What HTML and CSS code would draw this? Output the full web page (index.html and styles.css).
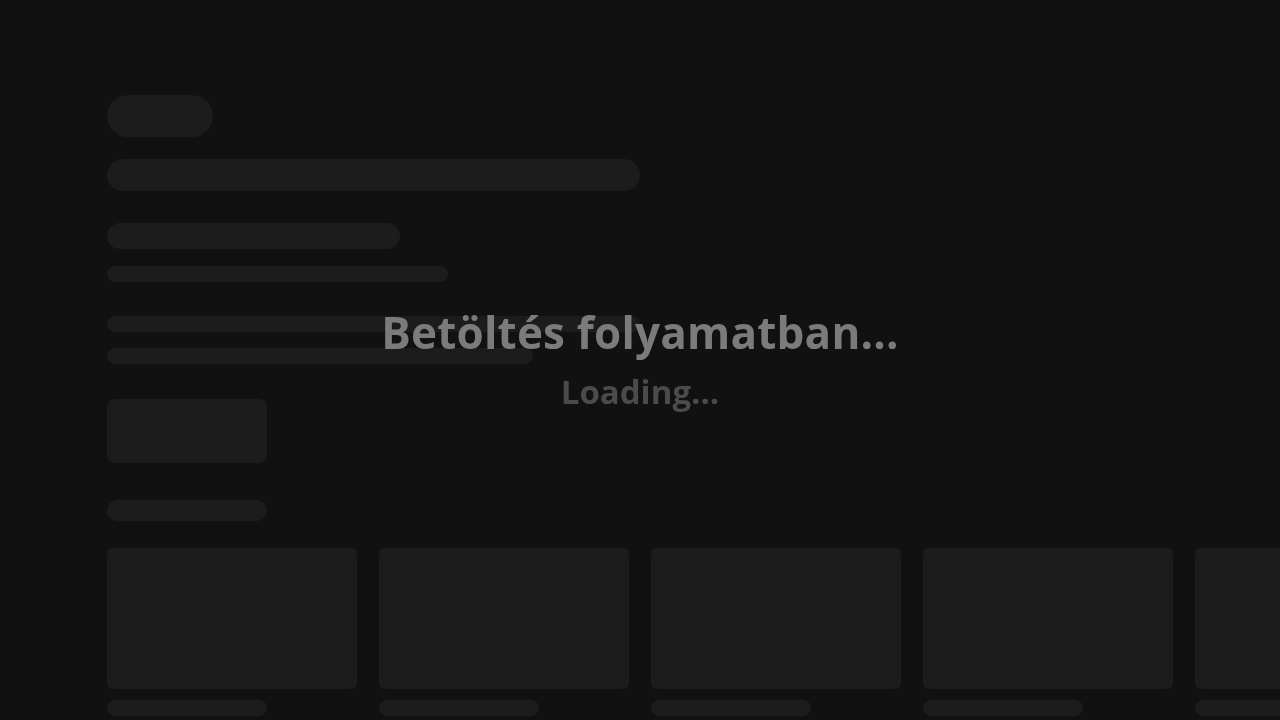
FILE: index.html
```html
<!DOCTYPE html>
<html lang="hu">
<head>
    <meta charset="UTF-8">
    <meta name="viewport" content="width=device-width, initial-scale=1.0">
    <title>Betöltés</title>
    <link rel="stylesheet" href="styles.css">
</head>
<body>
    <div class="page">
        <div class="sk sk-tag"></div>
        <div class="sk sk-title"></div>

        <div class="group">
            <div class="sk sk-sub"></div>
            <div class="sk sk-line sk-line-a"></div>
        </div>

        <div class="group lines">
            <div class="sk sk-line sk-line-b"></div>
            <div class="sk sk-line sk-line-c"></div>
        </div>

        <div class="sk sk-button"></div>

        <div class="sk sk-heading"></div>

        <div class="cards">
            <div class="card"><div class="sk sk-thumb"></div><div class="sk sk-caption"></div></div>
            <div class="card"><div class="sk sk-thumb"></div><div class="sk sk-caption"></div></div>
            <div class="card"><div class="sk sk-thumb"></div><div class="sk sk-caption"></div></div>
            <div class="card"><div class="sk sk-thumb"></div><div class="sk sk-caption"></div></div>
            <div class="card"><div class="sk sk-thumb"></div><div class="sk sk-caption"></div></div>
        </div>
    </div>

    <div class="loading">
        <h1>Betöltés folyamatban...</h1>
        <p>Loading...</p>
    </div>
</body>
</html>
```

FILE: styles.css
```css
html, body {
    margin: 0;
    height: 100%;
    background-color: #111111;
    overflow: hidden;
}
body {
    font-family: "Open Sans", "Noto Sans", sans-serif;
}
.page {
    padding: 95px 0 0 107px;
    display: flex;
    flex-direction: column;
    align-items: flex-start;
    overflow: hidden;
}
.sk {
    background-color: #1c1c1c;
}
.sk-tag {
    width: 106px;
    height: 42px;
    border-radius: 21px;
}
.sk-title {
    width: 533px;
    height: 32px;
    border-radius: 16px;
    margin-top: 22px;
}
.group {
    display: flex;
    flex-direction: column;
    margin-top: 32px;
    gap: 17px;
}
.sk-sub {
    width: 293px;
    height: 26px;
    border-radius: 13px;
}
.sk-line {
    height: 16px;
    border-radius: 8px;
}
.sk-line-a { width: 341px; }
.lines {
    margin-top: 34px;
    gap: 16px;
}
.sk-line-b { width: 533px; }
.sk-line-c { width: 426px; }
.sk-button {
    width: 160px;
    height: 64px;
    border-radius: 8px;
    margin-top: 35px;
}
.sk-heading {
    width: 160px;
    height: 21px;
    border-radius: 10px;
    margin-top: 37px;
}
.cards {
    display: flex;
    gap: 22px;
    margin-top: 27px;
    width: 1173px;
    overflow: hidden;
}
.card {
    flex: 0 0 250px;
    display: flex;
    flex-direction: column;
    gap: 11px;
}
.sk-thumb {
    height: 141px;
    border-radius: 6px;
}
.sk-caption {
    width: 160px;
    height: 16px;
    border-radius: 8px;
}
.loading {
    position: fixed;
    inset: 0;
    display: flex;
    flex-direction: column;
    align-items: center;
    justify-content: center;
    padding-top: 4px;
}
.loading h1 {
    margin: 0;
    font-size: 44px;
    font-weight: 700;
    color: #7b7b7b;
    letter-spacing: 0.2px;
    line-height: 60px;
}
.loading p {
    margin: 0;
    font-size: 33px;
    font-weight: 700;
    color: #4b4b4b;
    line-height: 60px;
}
```
